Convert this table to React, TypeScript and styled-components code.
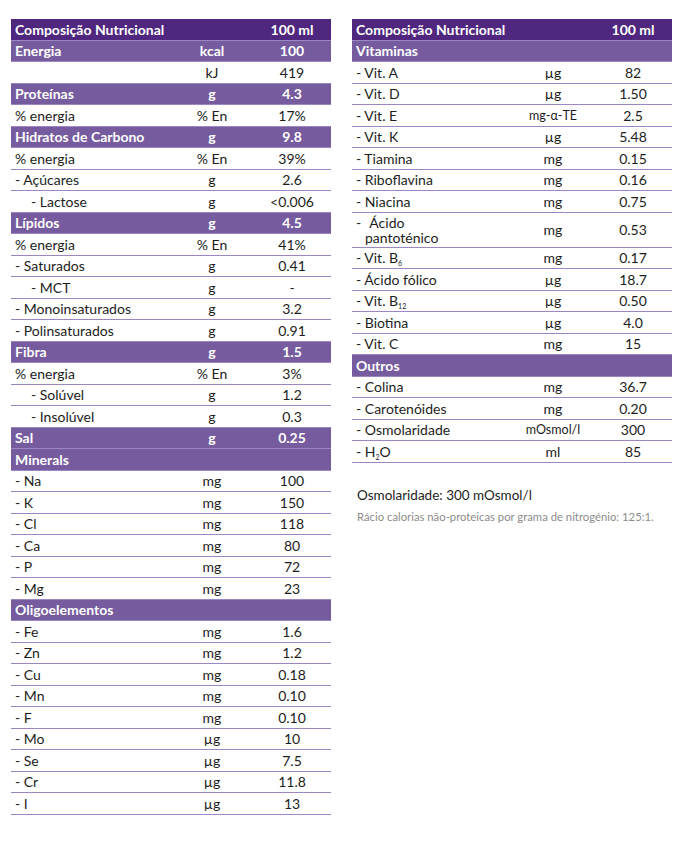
import React from "react";
import styled, { createGlobalStyle } from "styled-components";

const Global = createGlobalStyle`
  html, body { margin: 0; padding: 0; background: #ffffff; }
  body { font-family: "Lato", "Noto Sans", sans-serif; color: #1d1d1b; }
`;

const Page = styled.div`
  display: flex;
  align-items: flex-start;
  gap: 21px;
  padding: 19px 0 0 11px;
`;

const Column = styled.div`
  display: flex;
  flex-direction: column;
  width: 320px;
`;

const Table = styled.div`
  display: flex;
  flex-direction: column;
  width: 320px;
`;

type Kind = "head" | "section" | "item";

const Row = styled.div<{ $kind: Kind; $tall?: boolean }>`
  display: grid;
  grid-template-columns: 160px 82px 78px;
  align-items: center;
  box-sizing: border-box;
  height: ${(p) => (p.$tall ? "35px" : "21.5px")};
  border-bottom: 1px solid #9c86c4;
  font-size: 14px;
  font-weight: ${(p) => (p.$kind === "item" ? 400 : 700)};
  color: ${(p) => (p.$kind === "item" ? "#1d1d1b" : "#ffffff")};
  background: ${(p) =>
    p.$kind === "head" ? "#50277f" : p.$kind === "section" ? "#765b9e" : "#ffffff"};
`;

const Label = styled.div<{ $indent?: boolean; $span?: boolean }>`
  padding-left: ${(p) => (p.$indent ? "20px" : "4px")};
  white-space: nowrap;
  grid-column: ${(p) => (p.$span ? "1 / 3" : "auto")};
`;

const Cell = styled.div<{ $small?: boolean }>`
  text-align: center;
  white-space: nowrap;
  font-size: ${(p) => (p.$small ? "12.5px" : "14px")};
`;

const Sub = styled.sub`
  font-size: 7px;
  vertical-align: -3px;
  line-height: 0;
`;

const Lines = styled.div`
  display: flex;
  flex-direction: column;
  line-height: 15px;
`;

const Line = styled.span<{ $pad?: number }>`
  padding-left: ${(p) => p.$pad ?? 0}px;
  word-spacing: ${(p) => (p.$pad ? "0" : "5px")};
`;

const Note = styled.div`
  margin-top: 24px;
  padding-left: 5px;
  font-size: 13.5px;
  color: #1d1d1b;
`;

const Fine = styled.div`
  margin-top: 7px;
  padding-left: 5px;
  font-size: 11.3px;
  color: #8c8c8c;
`;

type R = {
  k: Kind;
  l: React.ReactNode;
  u?: string;
  v?: string;
  i?: boolean;
  small?: boolean;
  tall?: boolean;
};

const left: R[] = [
  { k: "section", l: "Energia", u: "kcal", v: "100" },
  { k: "item", l: "", u: "kJ", v: "419" },
  { k: "section", l: "Proteínas", u: "g", v: "4.3" },
  { k: "item", l: "% energia", u: "% En", v: "17%" },
  { k: "section", l: "Hidratos de Carbono", u: "g", v: "9.8" },
  { k: "item", l: "% energia", u: "% En", v: "39%" },
  { k: "item", l: "- Açúcares", u: "g", v: "2.6" },
  { k: "item", l: "- Lactose", u: "g", v: "<0.006", i: true },
  { k: "section", l: "Lípidos", u: "g", v: "4.5" },
  { k: "item", l: "% energia", u: "% En", v: "41%" },
  { k: "item", l: "- Saturados", u: "g", v: "0.41" },
  { k: "item", l: "- MCT", u: "g", v: "-", i: true },
  { k: "item", l: "- Monoinsaturados", u: "g", v: "3.2" },
  { k: "item", l: "- Polinsaturados", u: "g", v: "0.91" },
  { k: "section", l: "Fibra", u: "g", v: "1.5" },
  { k: "item", l: "% energia", u: "% En", v: "3%" },
  { k: "item", l: "- Solúvel", u: "g", v: "1.2", i: true },
  { k: "item", l: "- Insolúvel", u: "g", v: "0.3", i: true },
  { k: "section", l: "Sal", u: "g", v: "0.25" },
  { k: "section", l: "Minerals" },
  { k: "item", l: "- Na", u: "mg", v: "100" },
  { k: "item", l: "- K", u: "mg", v: "150" },
  { k: "item", l: "- Cl", u: "mg", v: "118" },
  { k: "item", l: "- Ca", u: "mg", v: "80" },
  { k: "item", l: "- P", u: "mg", v: "72" },
  { k: "item", l: "- Mg", u: "mg", v: "23" },
  { k: "section", l: "Oligoelementos" },
  { k: "item", l: "- Fe", u: "mg", v: "1.6" },
  { k: "item", l: "- Zn", u: "mg", v: "1.2" },
  { k: "item", l: "- Cu", u: "mg", v: "0.18" },
  { k: "item", l: "- Mn", u: "mg", v: "0.10" },
  { k: "item", l: "- F", u: "mg", v: "0.10" },
  { k: "item", l: "- Mo", u: "µg", v: "10" },
  { k: "item", l: "- Se", u: "µg", v: "7.5" },
  { k: "item", l: "- Cr", u: "µg", v: "11.8" },
  { k: "item", l: "- I", u: "µg", v: "13" },
];

const right: R[] = [
  { k: "section", l: "Vitaminas" },
  { k: "item", l: "- Vit. A", u: "µg", v: "82" },
  { k: "item", l: "- Vit. D", u: "µg", v: "1.50" },
  { k: "item", l: "- Vit. E", u: "mg-α-TE", v: "2.5", small: true },
  { k: "item", l: "- Vit. K", u: "µg", v: "5.48" },
  { k: "item", l: "- Tiamina", u: "mg", v: "0.15" },
  { k: "item", l: "- Riboflavina", u: "mg", v: "0.16" },
  { k: "item", l: "- Niacina", u: "mg", v: "0.75" },
  {
    k: "item",
    l: (
      <Lines>
        <Line>- Ácido</Line>
        <Line $pad={9}>pantoténico</Line>
      </Lines>
    ),
    u: "mg",
    v: "0.53",
    tall: true,
  },
  {
    k: "item",
    l: (
      <span>
        - Vit. B<Sub>6</Sub>
      </span>
    ),
    u: "mg",
    v: "0.17",
  },
  { k: "item", l: "- Ácido fólico", u: "µg", v: "18.7" },
  {
    k: "item",
    l: (
      <span>
        - Vit. B<Sub>12</Sub>
      </span>
    ),
    u: "µg",
    v: "0.50",
  },
  { k: "item", l: "- Biotina", u: "µg", v: "4.0" },
  { k: "item", l: "- Vit. C", u: "mg", v: "15" },
  { k: "section", l: "Outros" },
  { k: "item", l: "- Colina", u: "mg", v: "36.7" },
  { k: "item", l: "- Carotenóides", u: "mg", v: "0.20" },
  { k: "item", l: "- Osmolaridade", u: "mOsmol/l", v: "300", small: true },
  {
    k: "item",
    l: (
      <span>
        - H<Sub>2</Sub>O
      </span>
    ),
    u: "ml",
    v: "85",
  },
];

const Header = () => (
  <Row $kind="head">
    <Label $span>Composição Nutricional</Label>
    <Cell>100 ml</Cell>
  </Row>
);

const Rows = ({ rows }: { rows: R[] }) => (
  <>
    {rows.map((r, idx) => (
      <Row key={idx} $kind={r.k} $tall={r.tall}>
        <Label $indent={r.i}>{r.l}</Label>
        <Cell $small={r.small}>{r.u ?? ""}</Cell>
        <Cell>{r.v ?? ""}</Cell>
      </Row>
    ))}
  </>
);

export default function App() {
  return (
    <>
      <Global />
      <Page>
        <Table>
          <Header />
          <Rows rows={left} />
        </Table>
        <Column>
          <Table>
            <Header />
            <Rows rows={right} />
          </Table>
          <Note>Osmolaridade: 300 mOsmol/l</Note>
          <Fine>Rácio calorias não-proteicas por grama de nitrogénio: 125:1.</Fine>
        </Column>
      </Page>
    </>
  );
}
